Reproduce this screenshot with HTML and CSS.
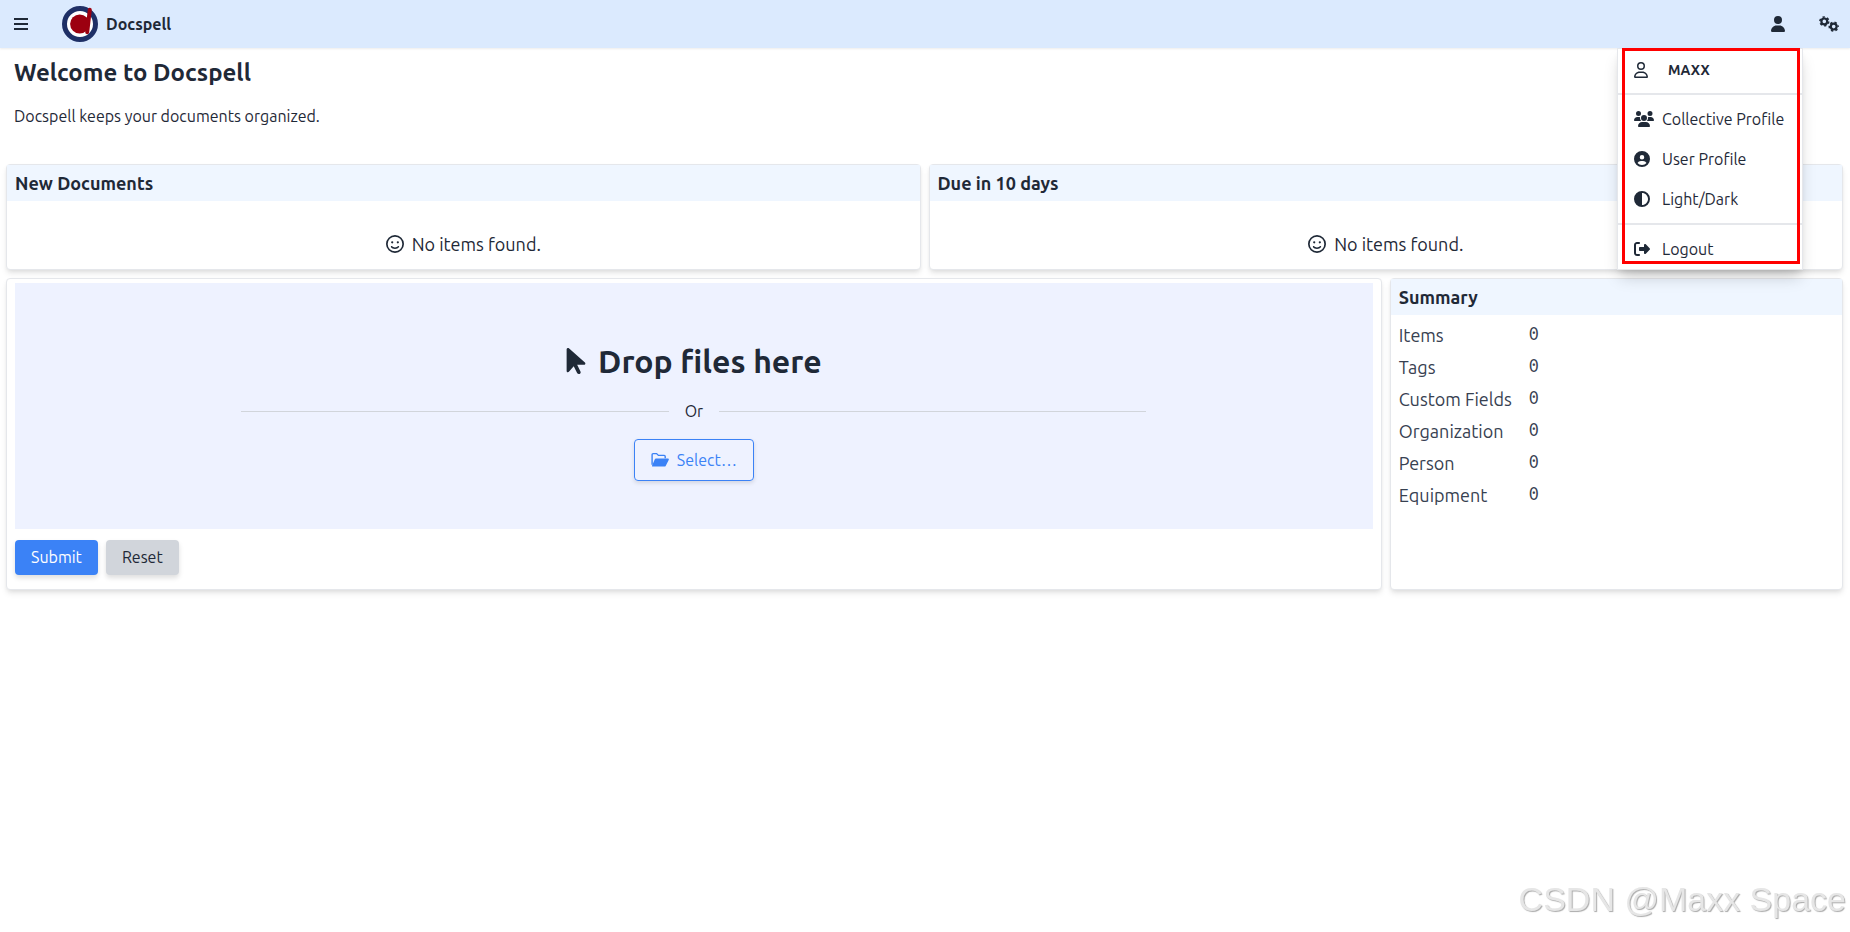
FILE: index.html
```
<!DOCTYPE html>
<html lang="en">
<head>
<meta charset="utf-8">
<title>Docspell</title>
<meta name="viewport" content="width=device-width, initial-scale=1">
<link rel="stylesheet" href="styles.css">
</head>
<body>
<svg class="sprite" aria-hidden="true">
  <symbol id="user" viewBox="0 0 448 512"><path d="M224 256A128 128 0 1 0 224 0a128 128 0 1 0 0 256zm-45.7 48C79.8 304 0 383.8 0 482.3C0 498.7 13.3 512 29.7 512H418.3c16.4 0 29.7-13.3 29.7-29.7C448 383.8 368.2 304 269.7 304H178.3z"/></symbol>
  <symbol id="user-outline" viewBox="0 0 448 512"><path d="M304 128a80 80 0 1 0-160 0 80 80 0 1 0 160 0zM96 128a128 128 0 1 1 256 0A128 128 0 1 1 96 128zM49.3 464H398.7c-8.9-63.3-63.3-112-129-112H178.3c-65.7 0-120.1 48.7-129 112zM0 482.3C0 383.8 79.8 304 178.3 304h91.4C368.2 304 448 383.8 448 482.3c0 16.4-13.3 29.7-29.7 29.7H29.7C13.3 512 0 498.7 0 482.3z"/></symbol>
  <symbol id="users" viewBox="0 0 640 512"><path d="M144 0a80 80 0 1 1 0 160A80 80 0 1 1 144 0zM512 0a80 80 0 1 1 0 160A80 80 0 1 1 512 0zM0 298.7C0 239.8 47.8 192 106.7 192h42.7c15.9 0 31 3.5 44.6 9.7c-1.3 7.2-1.9 14.7-1.9 22.3c0 38.2 16.8 72.5 43.3 96H21.3C9.6 320 0 310.4 0 298.7zM405.3 320c26.6-23.5 42.6-57.8 42.6-96c0-7.6-.7-15-1.9-22.3c13.6-6.3 28.7-9.7 44.6-9.7h42.7C592.2 192 640 239.8 640 298.7c0 11.8-9.6 21.3-21.3 21.3H405.3zM224 224a96 96 0 1 1 192 0 96 96 0 1 1-192 0zM128 485.3C128 411.7 187.7 352 261.3 352H378.7C452.3 352 512 411.7 512 485.3c0 14.7-11.9 26.7-26.7 26.7H154.7c-14.7 0-26.7-11.9-26.7-26.7z"/></symbol>
  <symbol id="circle-user" viewBox="0 0 512 512"><path fill-rule="evenodd" d="M399 384.2C376.9 345.8 335.4 320 288 320H224c-47.4 0-88.9 25.8-111 64.2c35.2 39.2 86.2 63.8 143 63.8s107.8-24.7 143-63.8zM0 256a256 256 0 1 1 512 0A256 256 0 1 1 0 256zm256 16a72 72 0 1 0 0-144 72 72 0 1 0 0 144z"/></symbol>
  <symbol id="half" viewBox="0 0 512 512"><path fill-rule="evenodd" d="M448 256c0-106-86-192-192-192V448c106 0 192-86 192-192zM0 256a256 256 0 1 1 512 0A256 256 0 1 1 0 256z"/></symbol>
  <symbol id="logout" viewBox="0 0 512 512"><path d="M377.9 105.9L500.7 228.7c7.2 7.2 11.3 17.1 11.3 27.3s-4.1 20.1-11.3 27.3L377.9 406.1c-6.4 6.4-15 9.9-24 9.9c-18.7 0-33.9-15.2-33.9-33.9V320H192c-17.7 0-32-14.3-32-32v-64c0-17.7 14.3-32 32-32h128v-62.1c0-18.7 15.2-33.9 33.9-33.9c9 0 17.6 3.6 24 9.9zM160 96H96c-17.7 0-32 14.3-32 32v256c0 17.7 14.3 32 32 32h64c17.7 0 32 14.3 32 32s-14.3 32-32 32H96c-53 0-96-43-96-96V128C0 75 43 32 96 32h64c17.7 0 32 14.3 32 32s-14.3 32-32 32z"/></symbol>
  <symbol id="smile" viewBox="0 0 512 512"><path d="M464 256A208 208 0 1 0 48 256a208 208 0 1 0 416 0zM0 256a256 256 0 1 1 512 0A256 256 0 1 1 0 256zm177.6 62.1C192.8 334.5 218.8 352 256 352s63.2-17.5 78.4-33.9c9-9.7 24.2-10.4 33.9-1.4s10.4 24.2 1.4 33.9c-22 23.8-60 49.4-113.6 49.4s-91.7-25.5-113.6-49.4c-9-9.7-8.4-24.9 1.4-33.9s24.9-8.4 33.9 1.4zM144.4 208a32 32 0 1 1 64 0 32 32 0 1 1-64 0zm192-32a32 32 0 1 1 0 64 32 32 0 1 1 0-64z"/></symbol>
  <symbol id="pointer" viewBox="0 0 320 512"><path d="M0 55.2V426c0 12.2 9.9 22 22 22c6.3 0 12.4-2.7 16.6-7.5L121.2 346l58.1 116.3c7.9 15.8 27.1 22.2 42.9 14.3s22.2-27.1 14.3-42.9L179.8 320H297.9c12.2 0 22.1-9.9 22.1-22.1c0-6.3-2.7-12.3-7.4-16.5L38.6 37.9C34.3 34.1 28.9 32 23.2 32C10.4 32 0 42.4 0 55.2z"/></symbol>
  <symbol id="folder" viewBox="0 0 18 16"><path d="M1.1 12.8V2.6Q1.1 1.6 2.1 1.6H5.6L7.4 3.4H13.2Q14.2 3.4 14.2 4.4V6.2" fill="none" stroke="currentColor" stroke-width="1.4"/><path d="M5 6.6H17Q18.3 6.7 17.7 7.9L14.8 13.7Q14.4 14.6 13.4 14.6H1.6Q.8 14.4 1.1 13.6L3.7 7.5Q4.1 6.6 5 6.6Z"/></symbol>
  <symbol id="gears" viewBox="0 0 20 16"><g fill="none" stroke="currentColor"><circle cx="5.3" cy="5.4" r="2.9" stroke-width="2.2"/><circle cx="5.3" cy="5.4" r="4.4" stroke-width="1.6" stroke-dasharray="2.3 2.308"/><circle cx="14.7" cy="10.6" r="2.9" stroke-width="2.2"/><circle cx="14.7" cy="10.6" r="4.4" stroke-width="1.6" stroke-dasharray="2.3 2.308" stroke-dashoffset="2"/></g></symbol>
</svg>

<header class="topbar">
  <button class="icon-button" type="button" aria-label="Menu"><svg class="bars" viewBox="0 0 14 12"><path d="M0 0h14v2H0zM0 5h14v2H0zM0 10h14v2H0z"/></svg></button>
  <a class="brand" href="#">
    <svg class="logo" viewBox="0 0 36 36" aria-hidden="true"><circle cx="18" cy="18" r="15.5" fill="#fff" stroke="#1e2f66" stroke-width="5"/><circle cx="17.7" cy="18" r="9.6" fill="#9c0010"/><path d="M27.8 3.8 25.2 26.2" stroke="#9c0010" stroke-width="4" stroke-linecap="round"/></svg>
    <span>Docspell</span>
  </a>
  <nav class="tools">
    <div class="user-menu">
      <button class="icon-button" type="button" aria-label="User menu" aria-expanded="true"><svg class="i-user"><use href="#user"/></svg></button>
      <div class="menu">
        <div class="menu-name"><svg class="i-user"><use href="#user-outline"/></svg><span>MAXX</span></div>
        <hr class="menu-line">
        <a class="menu-item" href="#"><span class="menu-icon"><svg class="i-wide"><use href="#users"/></svg></span>Collective Profile</a>
        <a class="menu-item" href="#"><span class="menu-icon"><svg class="i-square"><use href="#circle-user"/></svg></span>User Profile</a>
        <a class="menu-item" href="#"><span class="menu-icon"><svg class="i-square"><use href="#half"/></svg></span>Light/Dark</a>
        <hr class="menu-line">
        <a class="menu-item" href="#"><span class="menu-icon"><svg class="i-square"><use href="#logout"/></svg></span>Logout</a>
        <div class="highlight"></div>
      </div>
    </div>
    <button class="icon-button" type="button" aria-label="Settings"><svg class="i-wide"><use href="#gears"/></svg></button>
  </nav>
</header>

<main class="dashboard">
  <section class="welcome">
    <h1>Welcome to Docspell</h1>
    <p>Docspell keeps your documents organized.</p>
  </section>
  <section class="card half">
    <h2>New Documents</h2>
    <p class="empty"><svg class="i-smile"><use href="#smile"/></svg>No items found.</p>
  </section>
  <section class="card half">
    <h2>Due in 10 days</h2>
    <p class="empty"><svg class="i-smile"><use href="#smile"/></svg>No items found.</p>
  </section>
  <section class="card upload">
    <div class="dropzone">
      <div class="drop-title"><svg class="i-pointer"><use href="#pointer"/></svg>Drop files here</div>
      <div class="or">Or</div>
      <button class="select" type="button"><svg class="i-folder"><use href="#folder"/></svg>Select…</button>
    </div>
    <div class="actions">
      <button class="button primary" type="button">Submit</button>
      <button class="button" type="button">Reset</button>
    </div>
  </section>
  <section class="card summary">
    <h2>Summary</h2>
    <table>
      <tr><th scope="row">Items</th><td>0</td></tr>
      <tr><th scope="row">Tags</th><td>0</td></tr>
      <tr><th scope="row">Custom Fields</th><td>0</td></tr>
      <tr><th scope="row">Organization</th><td>0</td></tr>
      <tr><th scope="row">Person</th><td>0</td></tr>
      <tr><th scope="row">Equipment</th><td>0</td></tr>
    </table>
  </section>
</main>
<div class="watermark">CSDN @Maxx Space</div>
</body>
</html>
```
FILE: styles.css
```
* { box-sizing: border-box; }
body {
  margin: 0;
  min-height: 100vh;
  background: #fff;
  color: #1f2937;
  font: 16px/24px Ubuntu, "Open Sans", "Noto Sans", sans-serif;
}
h1, h2, p { margin: 0; }
a { color: inherit; text-decoration: none; }
button { font: inherit; color: inherit; cursor: pointer; }
svg { fill: currentColor; flex: none; }
.sprite { position: absolute; width: 0; height: 0; }

.topbar {
  display: flex;
  height: 48px;
  background: #dbeafe;
  box-shadow: 0 1px 2px rgba(0, 0, 0, .08);
}
.icon-button {
  display: flex;
  align-items: center;
  justify-content: center;
  height: 48px;
  padding: 0 14px;
  border: 0;
  background: none;
}
.bars { width: 14px; height: 12px; }
.brand {
  display: flex;
  align-items: center;
  gap: 8px;
  margin-left: 20px;
  font-weight: 700;
}
.logo { width: 36px; height: 36px; }
.tools { display: flex; gap: 14px; margin-left: auto; padding-right: 1px; }
.tools .icon-button { padding: 0 10px; }
.user-menu { position: relative; }
.i-user { width: 14px; height: 16px; }
.i-square { width: 16px; height: 16px; }
.i-wide { width: 20px; height: 16px; }
.i-smile { width: 18px; height: 18px; }
.i-pointer { width: 20px; height: 30px; }
.i-folder { width: 18px; height: 16px; }

.menu {
  position: absolute;
  z-index: 2;
  top: 48px;
  right: -8px;
  width: 186px;
  border: 1px solid #e5e7eb;
  background: #fff;
  box-shadow: 0 10px 15px -3px rgba(0, 0, 0, .18), 0 4px 6px -2px rgba(0, 0, 0, .08);
  white-space: nowrap;
}
.menu-name {
  display: flex;
  align-items: center;
  gap: 20px;
  height: 44px;
  padding: 0 16px 2px;
  font-size: 14px;
  font-weight: 700;
}
.menu-line { margin: 0 0 4px; border: 0; border-top: 2px solid #e5e7eb; }
.menu-item + .menu-line { margin-top: 4px; }
.menu-item { display: flex; align-items: center; gap: 8px; height: 40px; padding: 0 16px; }
.menu-icon { display: flex; width: 20px; }
.highlight {
  position: absolute;
  inset: -1px 2px 5px 4px;
  border: 3px solid #f00;
  pointer-events: none;
}

.dashboard {
  display: grid;
  grid-template-columns: repeat(4, 1fr);
  gap: 8px;
  padding: 0 7px 0 6px;
}
.welcome { grid-column: 1 / -1; padding: 9px 8px 28px; }
.welcome h1 { margin-bottom: 15px; font-size: 24px; line-height: 32px; }
.card {
  border: 1px solid #e5e7eb;
  border-radius: 4px;
  background: #fff;
  box-shadow: 0 4px 6px -1px rgba(0, 0, 0, .1), 0 2px 4px -1px rgba(0, 0, 0, .06);
}
.card h2 {
  padding: 4px 8px;
  background: #eff6ff;
  font-size: 18px;
  line-height: 28px;
}
.half { grid-column: span 2; }
.empty {
  display: flex;
  align-items: center;
  justify-content: center;
  gap: 8px;
  padding: 29px 0 11px;
  font-size: 18px;
  line-height: 28px;
}
.upload { grid-column: span 3; padding: 4px 8px 14px; }
.dropzone {
  display: flex;
  flex-direction: column;
  align-items: center;
  padding: 60px 0 48px;
  background: #eef2ff;
}
.drop-title {
  display: flex;
  align-items: center;
  gap: 12px;
  font-size: 32px;
  font-weight: 700;
  line-height: 36px;
}
.or { display: flex; align-items: center; gap: 16px; width: 66.67%; margin: 20px 0 16px; }
.or::before, .or::after { content: ""; flex: 1; border-top: 1px solid #d1d5db; }
.select {
  display: flex;
  align-items: center;
  gap: 8px;
  height: 42px;
  padding: 0 16px;
  border: 1px solid #3b82f6;
  border-radius: 4px;
  background: none;
  color: #3b82f6;
  box-shadow: 0 2px 4px rgba(0, 0, 0, .12);
}
.actions { display: flex; gap: 8px; margin-top: 11px; }
.button {
  height: 35px;
  padding: 0 16px 2px;
  border: 0;
  border-radius: 4px;
  background: #d1d5db;
  box-shadow: 0 3px 5px rgba(0, 0, 0, .13);
}
.primary { background: #3b82f6; color: #fff; }
.summary table { margin-top: 4px; padding-left: 8px; border-spacing: 0; color: #374151; }
.summary tr { height: 32px; }
.summary th, .summary td { padding: 0; text-align: left; }
.summary th { padding-right: 17px; font-size: 18px; font-weight: 400; }
.summary td { padding-bottom: 4px; font: 18px/24px "Ubuntu Mono", "Liberation Mono", monospace; }
.watermark {
  position: fixed;
  right: 4px;
  bottom: 9px;
  color: #e6e6e6;
  font: 34px/48px "Liberation Sans", Arial, sans-serif;
  text-shadow: 1px 1px 1px #aaa;
}
```
